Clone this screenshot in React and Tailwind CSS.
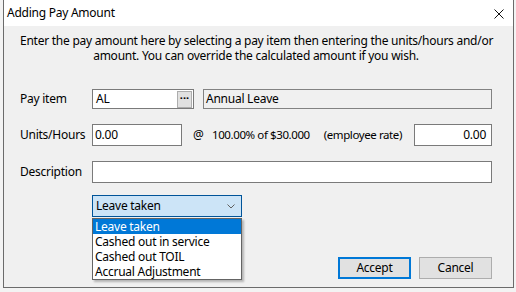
import { useState } from 'react'

const font = { fontFamily: '"Noto Sans", "Open Sans", sans-serif' }

const options = ['Leave taken', 'Cashed out in service', 'Cashed out TOIL', 'Accrual Adjustment']

export default function App() {
  const [selected] = useState(0)

  return (
    <div
      className="h-[292px] w-[516px] overflow-hidden whitespace-nowrap bg-[#f3f3f3] text-[12px] tracking-[-0.25px] text-black"
      style={font}
    >
      <div className="ml-[3px] flex h-[288px] w-[511px] flex-col border-x border-b border-[#6b6b6b] bg-[#f0f0f0]">
        {/* title bar */}
        <div className="flex h-[26px] shrink-0 items-center justify-between bg-white pl-[3px] pr-[9px]">
          <div className="leading-none">Adding Pay Amount</div>
          <svg width="10" height="10" viewBox="0 0 10 10" className="mt-[2px]">
            <path d="M0.5 0.5 L9.5 9.5 M9.5 0.5 L0.5 9.5" stroke="#111" strokeWidth="1" />
          </svg>
        </div>

        <div className="flex flex-col pl-[16px] pr-[21px] pt-[7px]">
          <div className="text-center leading-[15px]">
            Enter the pay amount here by selecting a pay item then entering the units/hours and/or
            <br />
            amount. You can override the calculated amount if you wish.
          </div>

          {/* pay item */}
          <div className="mt-[26px] flex h-[20px] items-center">
            <div className="w-[72px] shrink-0">Pay item</div>
            <div className="flex h-[20px] w-[102px] shrink-0 items-center justify-between border border-[#7a7a7a] bg-white pl-[3px] pr-[1px]">
              <span>AL</span>
              <span className="flex h-[17px] w-[15px] items-center justify-center border border-[#adadad] bg-[#e1e1e1] pb-[3px] text-[11px] font-bold leading-none tracking-normal">
                ···
              </span>
            </div>
            <div className="ml-[9px] flex h-[20px] flex-1 items-center border border-[#828282] bg-[#f0f0f0] pl-[2px]">
              Annual Leave
            </div>
          </div>

          {/* units */}
          <div className="mt-[15px] flex h-[22px] items-center">
            <div className="w-[72px] shrink-0">Units/Hours</div>
            <div className="flex h-[22px] w-[90px] shrink-0 items-center border border-[#7a7a7a] bg-white pl-[2px]">0.00</div>
            <div className="ml-[11px] w-[19px] shrink-0">@</div>
            <div className="shrink-0 text-[11.5px] tracking-[-0.4px]">100.00% of $30.000</div>
            <div className="ml-auto mr-[12px] shrink-0 text-[11.5px] tracking-[-0.4px]">(employee rate)</div>
            <div className="flex h-[22px] w-[78px] shrink-0 items-center justify-end border border-[#7a7a7a] bg-white pr-[5px]">
              0.00
            </div>
          </div>

          {/* description */}
          <div className="mt-[15px] flex h-[22px] items-center">
            <div className="w-[72px] shrink-0">Description</div>
            <div className="h-[22px] flex-1 border border-[#7a7a7a] bg-white" />
          </div>

          {/* dropdown */}
          <div className="relative ml-[72px] mt-[12px] w-[150px]">
            <div className="flex h-[22px] items-center justify-between border border-[#005499] bg-[#cce4f7] pl-[3px] pr-[6px]">
              <span>{options[selected]}</span>
              <svg width="8" height="5" viewBox="0 0 8 5">
                <path d="M0.5 0.5 L4 4 L7.5 0.5" fill="none" stroke="#606060" strokeWidth="1" />
              </svg>
            </div>
            <div className="absolute left-0 top-[23px] z-10 w-[150px] border border-[#646464] bg-white shadow-[2px_2px_2px_rgba(0,0,0,0.25)]">
              {options.map((o, i) => (
                <div
                  key={o}
                  className={
                    i === selected
                      ? 'flex h-[15px] items-center overflow-hidden bg-[#0078d7] pl-[2px] leading-[14px] text-white'
                      : 'flex h-[15px] items-center overflow-hidden pl-[2px] leading-[14px] text-black'
                  }
                >
                  {o}
                </div>
              ))}
            </div>
          </div>

          {/* buttons */}
          <div className="mt-[40px] flex justify-end gap-[8px]">
            <button type="button" className="h-[22px] w-[73px] border-2 border-[#0078d7] bg-[#e1e1e1] leading-none">
              Accept
            </button>
            <button type="button" className="h-[22px] w-[73px] border border-[#adadad] bg-[#e1e1e1] leading-none">
              Cancel
            </button>
          </div>
        </div>
      </div>
    </div>
  )
}
